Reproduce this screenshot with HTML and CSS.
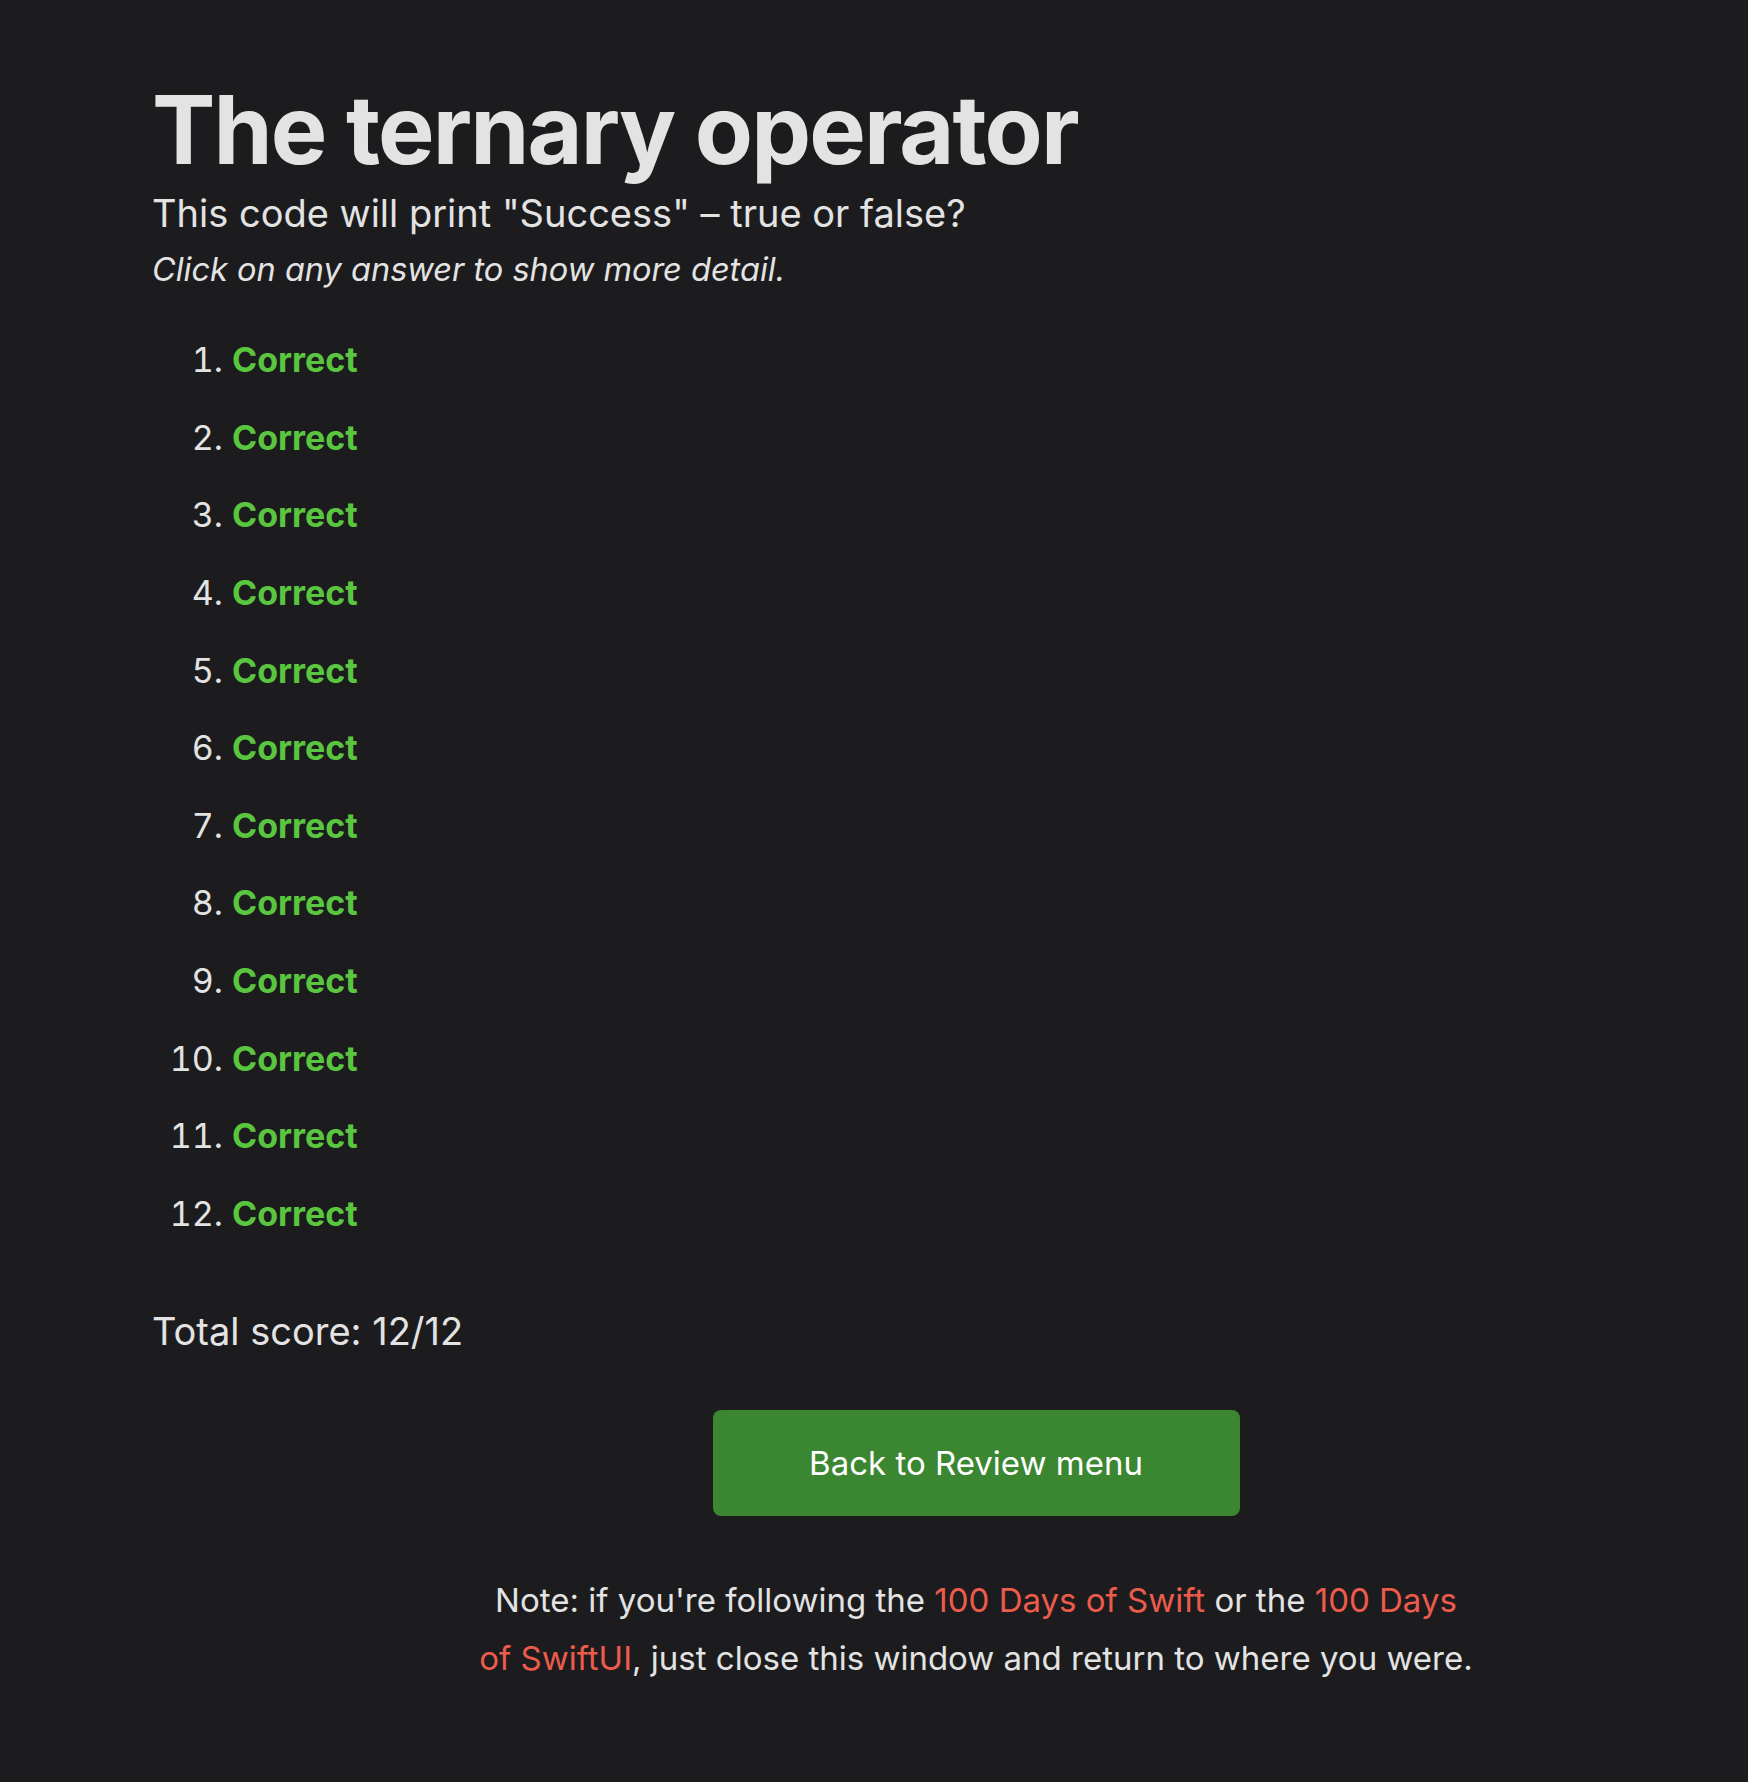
FILE: index.html
```html
<!DOCTYPE html>
<html lang="en">
<head>
<meta charset="utf-8">
<title>The ternary operator</title>
<link rel="stylesheet" href="styles.css">
</head>
<body>
<main class="page">
  <h1 class="title">The ternary operator</h1>
  <p class="question">This code will print "Success" – true or false?</p>
  <p class="hint">Click on any answer to show more detail.</p>
  <ol class="answers">
    <li><span class="correct">Correct</span></li>
    <li><span class="correct">Correct</span></li>
    <li><span class="correct">Correct</span></li>
    <li><span class="correct">Correct</span></li>
    <li><span class="correct">Correct</span></li>
    <li><span class="correct">Correct</span></li>
    <li><span class="correct">Correct</span></li>
    <li><span class="correct">Correct</span></li>
    <li><span class="correct">Correct</span></li>
    <li><span class="correct">Correct</span></li>
    <li><span class="correct">Correct</span></li>
    <li><span class="correct">Correct</span></li>
  </ol>
  <p class="score">Total score: 12/12</p>
  <div class="footer">
    <a class="back-button" href="#">Back to Review menu</a>
    <p class="note">Note: if you're following the <a class="link" href="#">100 Days of Swift</a> or the <a class="link" href="#">100 Days of SwiftUI</a>, just close this window and return to where you were.</p>
  </div>
</main>
</body>
</html>
```

FILE: styles.css
```css
html, body {
  margin: 0;
  padding: 0;
  background: #1c1c1e;
}

body {
  color: #e3e3e3;
  font-family: Inter, "Noto Sans", "Liberation Sans", sans-serif;
  min-height: 1782px;
}

.page {
  padding: 73px 0 0 152px;
}

.title {
  margin: 0;
  font-size: 95px;
  font-weight: 700;
  line-height: 1.2;
  letter-spacing: -0.02em;
}

.question {
  margin: 0;
  font-size: 38px;
  line-height: 1.4;
}

.hint {
  margin: 7px 0 0;
  font-size: 32.5px;
  font-style: italic;
  line-height: 1.4;
}

.answers {
  margin: 41.5px 0 0;
  padding-left: 80px;
  font-size: 34px;
  line-height: 51px;
}

.answers li {
  padding-left: 0;
  margin-bottom: 26.6px;
}

.answers li::marker {
  color: #e3e3e3;
}

.correct {
  color: #5ac63f;
  font-weight: 700;
}

.score {
  margin: 66px 0 0;
  font-size: 38px;
  line-height: 1.4;
}

.footer {
  margin-left: 52px;
  display: flex;
  flex-direction: column;
  align-items: center;
  text-align: center;
}

.back-button {
  margin-top: 52px;
  width: 527px;
  height: 106px;
  box-sizing: border-box;
  display: flex;
  align-items: center;
  justify-content: center;
  background: #3b8630;
  color: #ffffff;
  border-radius: 8px;
  font-size: 33px;
  text-decoration: none;
}

.note {
  margin: 55px 0 0;
  max-width: 1000px;
  font-size: 33px;
  line-height: 58px;
}

.link {
  color: #ec5b4b;
  text-decoration: none;
}
```
